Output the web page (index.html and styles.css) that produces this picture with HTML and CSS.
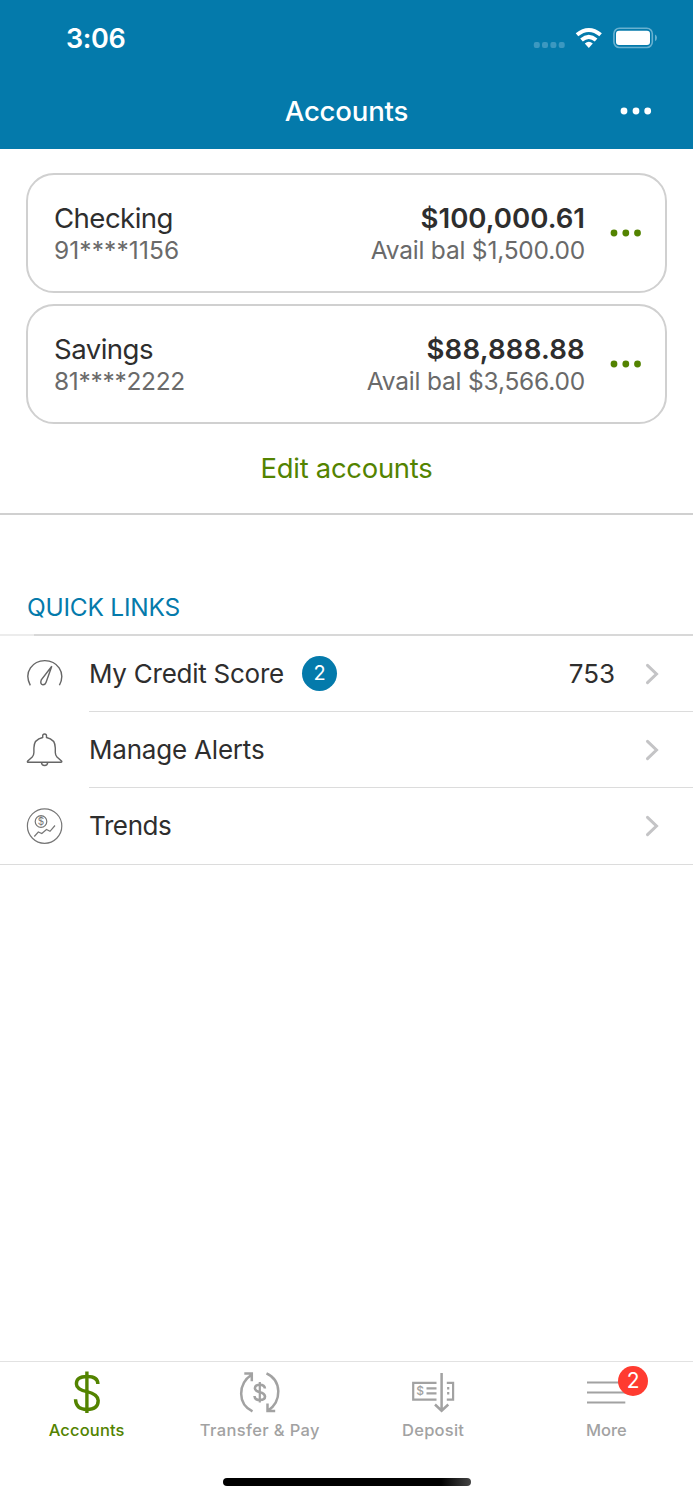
FILE: index.html
```html
<!DOCTYPE html>
<html lang="en">
<head>
<meta charset="utf-8">
<title>Accounts</title>
<link rel="stylesheet" href="styles.css">
</head>
<body>
<div class="screen">
  <header class="header">
    <div class="status">
      <span class="time">3:06</span>
      <svg class="status-icons" width="130" height="30" viewBox="530 23 130 30">
        <g fill="#3c98c0"><rect x="533.8" y="42" width="6" height="6" rx="2"/><rect x="542" y="42" width="6" height="6" rx="2"/><rect x="550.4" y="42" width="6" height="6" rx="2"/><rect x="558.7" y="42" width="6" height="6" rx="2"/></g>
        <g fill="none" stroke="#fff" stroke-width="4"><path d="M577 34.800Q588.800 25.200 600.600 34.800"/><path d="M581.500 40Q588.800 33.700 596.100 40"/></g>
        <path d="M584.800 43.600Q588.800 40 592.800 43.600L588.800 48z" fill="#fff"/>
        <rect x="613.900" y="28.200" width="38.400" height="19.300" rx="5.500" fill="none" stroke="#68b1d0" stroke-width="1.600"/>
        <rect x="616" y="30.700" width="34" height="14.300" rx="3" fill="#fff"/>
        <path d="M655 34.500Q657 35.500 657 37.800T655 41.200z" fill="#68b1d0"/>
      </svg>
    </div>
    <div class="nav">
      <h1 class="title">Accounts</h1>
      <svg class="nav-more" width="32" height="8" viewBox="0 0 32 8" fill="#fff"><circle cx="4" cy="4" r="3.400"/><circle cx="16" cy="4" r="3.400"/><circle cx="27.700" cy="4" r="3.400"/></svg>
    </div>
  </header>

  <section class="accounts">
    <article class="card checking">
      <div class="card-left"><div class="name">Checking</div><div class="sub number">91****1156</div></div>
      <div class="card-right"><div class="balance">$100,000.61</div><div class="sub avail">Avail bal $1,500.00</div></div>
      <svg class="card-more" width="32" height="8" viewBox="0 0 32 8"><circle cx="4" cy="4" r="3.400"/><circle cx="15.800" cy="4" r="3.400"/><circle cx="27.500" cy="4" r="3.400"/></svg>
    </article>
    <article class="card savings">
      <div class="card-left"><div class="name">Savings</div><div class="sub number">81****2222</div></div>
      <div class="card-right"><div class="balance">$88,888.88</div><div class="sub avail">Avail bal $3,566.00</div></div>
      <svg class="card-more" width="32" height="8" viewBox="0 0 32 8"><circle cx="4" cy="4" r="3.400"/><circle cx="15.800" cy="4" r="3.400"/><circle cx="27.500" cy="4" r="3.400"/></svg>
    </article>
    <div class="edit"><span>Edit accounts</span></div>
  </section>

  <section class="links">
    <h2 class="links-title">QUICK LINKS</h2>
    <div class="top-rule"></div>
    <div class="row">
      <svg class="row-icon" width="40" height="40" viewBox="24 654 40 40" fill="none" stroke="#666" stroke-width="1.400"><path d="M30.300 685.300C23.200 672 33 660.600 44.800 660.600S66.300 672 59.400 685.300"/><path d="M51.800 666.200L41.300 679.800Q39.800 684.300 42.800 684.700Q45.300 684.800 46 682.500Z"/></svg>
      <div class="row-body"><span class="row-label credit">My Credit Score</span><span class="badge">2</span><span class="score">753</span>
      <svg class="chevron" width="14" height="22" viewBox="0 0 14 22"><path d="M2.500 2.300L11.500 11L2.500 19.700"/></svg></div>
    </div>
    <div class="row">
      <svg class="row-icon" width="40" height="40" viewBox="24 730 40 40" fill="none" stroke="#666" stroke-width="1.400"><path d="M42.700 737.500V735.800Q42.700 734 44.600 734T46.500 735.800V737.500Q55.300 739.300 55.300 748V752.500Q55.300 755 57 757L61.700 761.200Q62.200 762.200 61 762.200H28.300Q27 762.200 27.500 761.200L32.200 757Q33.900 755 33.900 752.500V748Q33.900 739.300 42.700 737.500Z"/><path d="M41.400 762.200Q41.600 765.500 44.600 765.500T47.700 762.200"/></svg>
      <div class="row-body"><span class="row-label alerts">Manage Alerts</span>
      <svg class="chevron" width="14" height="22" viewBox="0 0 14 22"><path d="M2.500 2.300L11.500 11L2.500 19.700"/></svg></div>
    </div>
    <div class="row">
      <svg class="row-icon" width="40" height="40" viewBox="24 806 40 40" fill="none" stroke="#777" stroke-width="1.200"><circle cx="44.600" cy="826.100" r="17.200"/><circle cx="41" cy="821.500" r="5.800"/><text x="41" y="825.100" text-anchor="middle" class="coin">$</text><path d="M34.300 836.500L38.300 832L41.800 833.500L46.500 829.500L50 831.300L55 825.500"/></svg>
      <div class="row-body"><span class="row-label trends">Trends</span>
      <svg class="chevron" width="14" height="22" viewBox="0 0 14 22"><path d="M2.500 2.300L11.500 11L2.500 19.700"/></svg></div>
    </div>
  </section>

  <nav class="tabs">
    <div class="tab active">
      <svg width="60" height="50" viewBox="57 1367 60 50" fill="none" stroke="#538300" stroke-width="3.400"><path d="M86.900 1371.500V1413"/><path d="M97.900 1384Q97.900 1376.500 87 1376.500T76.400 1384Q76.400 1389.300 87 1391.700T98.200 1400.500Q98.200 1409.500 87 1409.500T75.500 1399.300"/></svg>
      <span class="t-accounts">Accounts</span>
    </div>
    <div class="tab">
      <svg width="60" height="50" viewBox="230 1367 60 50" fill="none" stroke="#a2a2a2" stroke-width="2.500"><path d="M252.500 1411.300C237.500 1404 237.500 1384 251.800 1374.500M244.300 1373.600H251.800V1381.200"/><path d="M266.500 1373.300C282 1380.500 282 1401.500 267.800 1410.800M267.500 1403.500V1410.900H275.200"/><path stroke-width="2.200" d="M259.800 1382V1402.500"/><path stroke-width="2.600" d="M264.900 1388.500Q264.600 1384.800 259.800 1384.800T254.900 1388.300Q254.900 1391 259.800 1392.200T265 1396.500Q265 1400 259.800 1400T254.500 1396"/></svg>
      <span class="t-transfer">Transfer &amp; Pay</span>
    </div>
    <div class="tab">
      <svg width="60" height="50" viewBox="403 1367 60 50" fill="none" stroke="#a2a2a2" stroke-width="2.200"><path d="M436.500 1382.800H413.200V1399.600H436.500M446.800 1382.800H453.100V1399.600H446.800M426.500 1388.300H436.500M426.500 1393.400H436.500"/><path d="M448.200 1387V1389.600M448.200 1392V1394.600"/><path stroke-width="2.500" d="M441.600 1373V1410.500M435 1404.500L441.600 1410.700L448.300 1404.500"/><text x="420.200" y="1395" text-anchor="middle" class="check-dollar">$</text></svg>
      <span class="t-deposit">Deposit</span>
    </div>
    <div class="tab">
      <svg width="60" height="50" viewBox="576 1367 60 50" stroke="#a2a2a2" stroke-width="2.200"><path d="M587 1382.500H625.300M587 1392.500H625.300M587 1402.500H625.300"/></svg>
      <span class="t-more">More</span>
      <span class="tab-badge">2</span>
    </div>
  </nav>
  <div class="home"></div>
</div>
</body>
</html>
```
FILE: styles.css
```css
* { box-sizing: border-box; }
body { margin: 0; background: #fff; font-family: Inter, "Liberation Sans", sans-serif; color: #2e2e2e; }
svg { display: block; flex: none; }
.screen { width: 693px; height: 1500px; display: flex; flex-direction: column; overflow: hidden; white-space: nowrap; }
h1, h2 { margin: 0; font-weight: 400; }

.header { height: 149px; background: #047aab; color: #fff; }
.status { height: 76px; display: flex; justify-content: space-between; padding: 23px 33px 0 66px; }
.time { font-size: 27px; line-height: 32px; font-weight: 600; letter-spacing: -0.4px; }
.nav { height: 69px; display: grid; grid-template-columns: 1fr auto 1fr; align-items: center; padding: 0 41px; }
.title { grid-column: 2; font-size: 27.600px; line-height: 34px; font-weight: 450; letter-spacing: -0.2px; }
.nav-more { justify-self: end; }

.accounts { height: 366px; padding: 24px 26px 0; display: flex; flex-direction: column; border-bottom: 2px solid #d0d0d0; }
.card { height: 119.500px; margin-bottom: 11.800px; flex: none; border: 2px solid #d0d0d0; border-radius: 28px; display: flex; align-items: center; padding: 2px 23px 0 26px; }
.card-right { margin-left: auto; text-align: right; }
.name, .balance { font-size: 27.600px; line-height: 32px; }
.name { letter-spacing: -0.55px; }
.balance { font-weight: 600; }
.savings .balance { letter-spacing: 0.2px; }
.sub { font-size: 24.500px; line-height: 32px; color: #6a6a6a; letter-spacing: -0.2px; }
.checking .number { letter-spacing: 0.1px; }
.savings .number { letter-spacing: -0.3px; }
.card-more { margin: -2px 0 0 25px; fill: #538300; }
.edit { display: flex; justify-content: center; color: #538300; font-size: 27.400px; line-height: 34px; letter-spacing: -0.25px; margin-top: 15px; }

.links { height: 846px; padding-top: 75px; }
.links-title { padding-left: 27px; font-size: 24.500px; line-height: 34px; color: #047aab; letter-spacing: -0.25px; }
.top-rule { height: 2px; margin-top: 10px; background: linear-gradient(90deg, #ececec 34px, #d8d8d8 34px); }
.row { height: 76px; display: flex; align-items: center; padding-left: 24px; }
.row-body { height: 100%; flex: 1; margin-left: 25px; border-bottom: 1px solid #dcdcdc; display: flex; align-items: center; padding-right: 34px; }
.row:last-child { height: 77px; border-bottom: 1px solid #dcdcdc; }
.row:last-child .row-body { border-bottom: 0; }
.row-label, .score { font-size: 26px; line-height: 34px; }
.credit { letter-spacing: -0.25px; }
.alerts { letter-spacing: -0.2px; }
.trends { letter-spacing: -0.4px; }
.badge { width: 35px; height: 35px; margin-left: 18px; border-radius: 50%; background: #047aab; color: #fff; font-size: 20px; line-height: 35px; text-align: center; }
.score { margin-left: auto; }
.chevron { margin-left: auto; fill: none; stroke: #c4c4c6; stroke-width: 3; stroke-linecap: round; }
.score + .chevron { margin-left: 30px; }
.coin { font-size: 10px; fill: #777; stroke: none; }

.tabs { flex: none; height: 90px; border-top: 1px solid #e2e2e2; display: grid; grid-template-columns: repeat(4, 1fr); color: #a2a2a2; }
.tab { position: relative; display: flex; flex-direction: column; align-items: center; padding-top: 5px; font-size: 16.500px; line-height: 20px; font-weight: 500; }
.tab > span:not(.tab-badge) { margin-top: 3px; }
.active { color: #538300; }
.t-accounts { letter-spacing: 0.15px; }
.t-transfer { letter-spacing: 0.38px; }
.t-deposit { letter-spacing: 0.25px; }
.tab-badge { position: absolute; left: 98.500px; top: 4px; width: 30px; height: 30px; border-radius: 50%; background: #ff3b30; color: #fff; font-size: 21px; line-height: 30px; font-weight: 400; text-align: center; }
.check-dollar { font-size: 12px; fill: #a2a2a2; stroke: none; }
.home { width: 248px; height: 8px; margin: 27px auto 0; border-radius: 4px; background: linear-gradient(90deg, #000 88%, #444); }
```
